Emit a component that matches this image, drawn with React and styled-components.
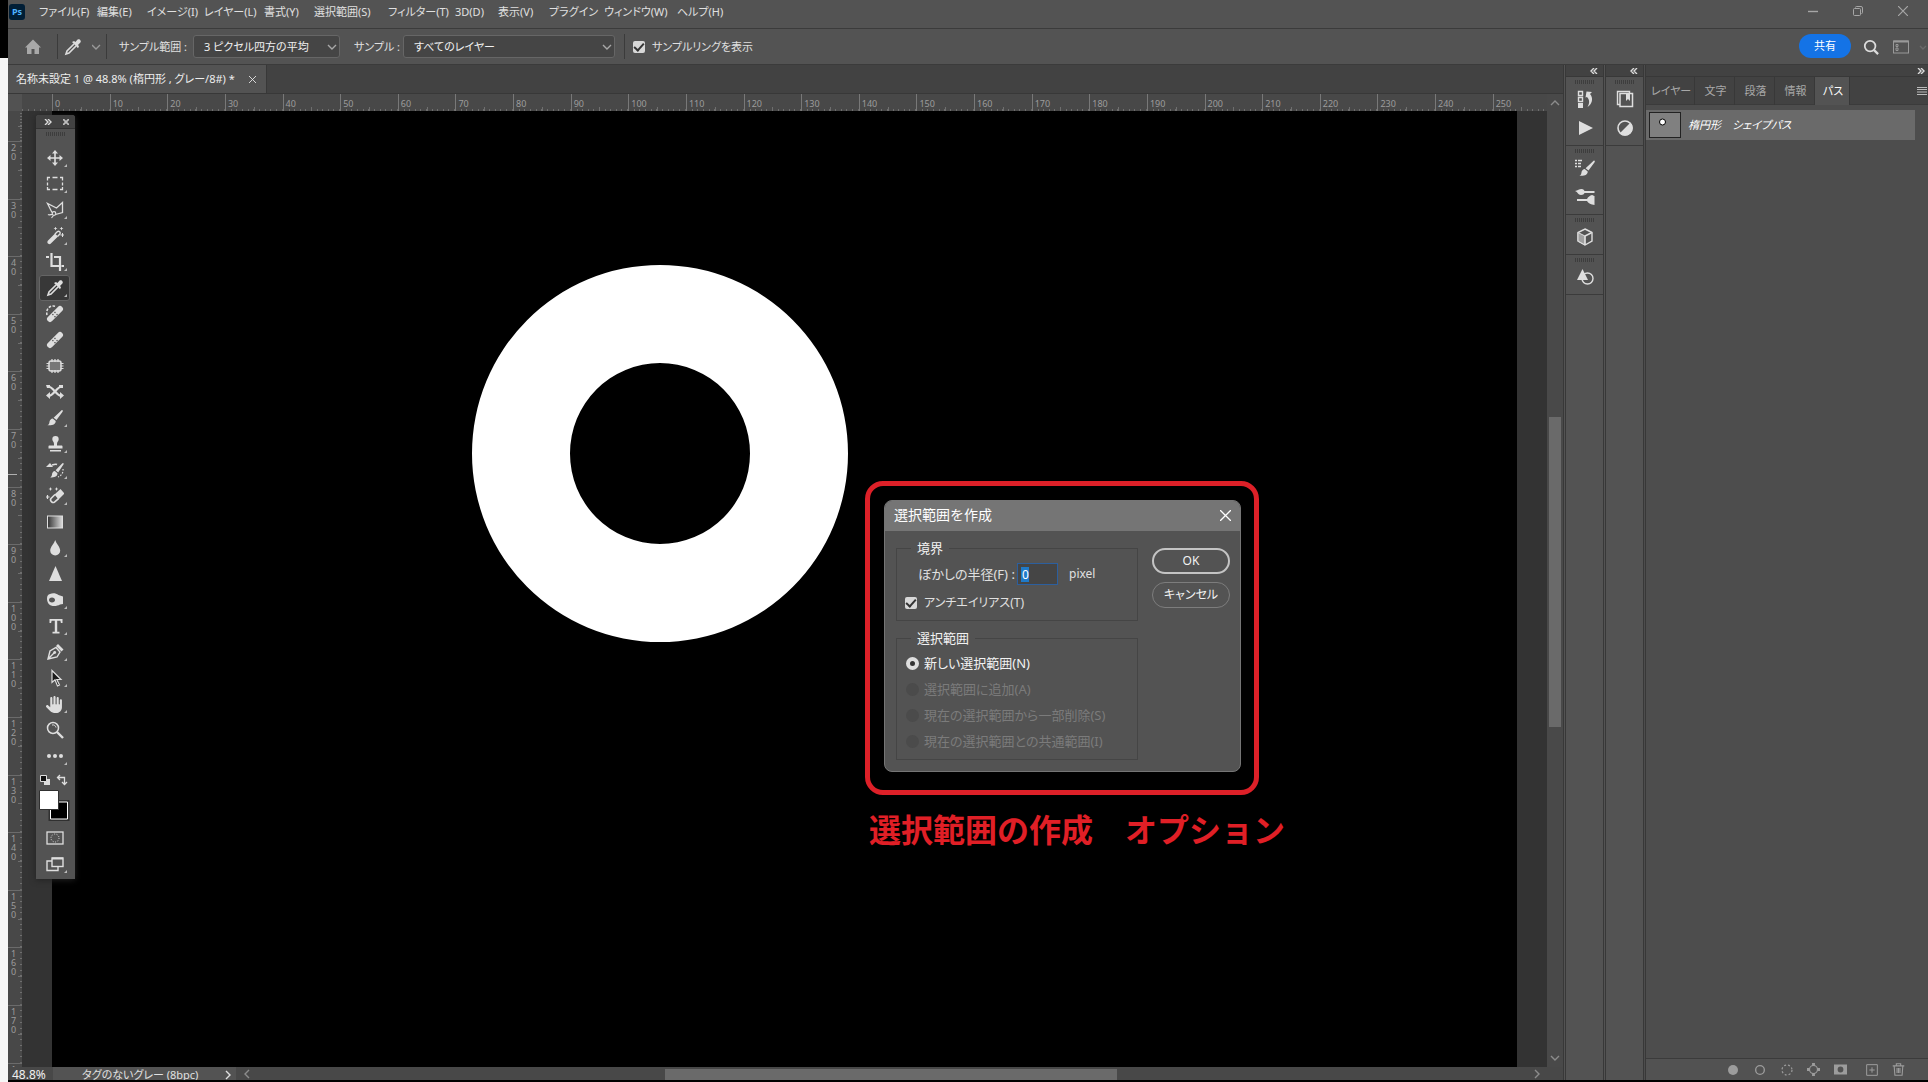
import styled, { createGlobalStyle, css } from "styled-components";
import { FaHand } from "react-icons/fa6";

const GlobalStyle = createGlobalStyle`
  * {
    box-sizing: border-box;
  }

  body {
    margin: 0;
    background: #000;
    color: #e0e0e0;
    font-family: "Noto Sans", "Noto Sans CJK JP", sans-serif;
    font-size: 11px;
    line-height: 16px;
    font-feature-settings: "palt";
  }

  button,
  input,
  select {
    margin: 0;
    padding: 0;
    border: 0;
    background: none;
    color: inherit;
    font: inherit;
    font-feature-settings: inherit;
  }

  svg {
    display: block;
    flex: none;
  }
`;

/* ---------- window frame ---------- */

const Screen = styled.div`
  display: grid;
  grid-template-columns: 8px minmax(0, 1fr);
  height: 100vh;
  overflow: hidden;
`;

const PageBehind = styled.div`
  margin-top: 58px;
  background: #f6f6f6;
`;

const Window = styled.div`
  display: flex;
  flex-direction: column;
  min-height: 0;
  margin-bottom: 2px;
  background: #535353;
`;

const MenuBar = styled.header`
  display: flex;
  align-items: flex-start;
  height: 29px;
  border-bottom: 1px solid #3b3b3b;
`;

const Logo = styled.div`
  width: 16px;
  height: 16px;
  margin: 4px 14px 0 1px;
  border-radius: 3px;
  background: #001e36;
  color: #4db2ff;
  font-size: 9px;
  font-weight: 700;
  text-align: center;
`;

const Menu = styled.nav`
  display: flex;
  padding-top: 4px;
`;

const MenuItem = styled.button`
  width: ${(props) => props.$width}px;
  text-align: left;
  white-space: nowrap;
`;

const WindowControls = styled.div`
  display: flex;
  margin-left: auto;
  padding-right: 3px;
  color: #a6a6a6;
`;

const WindowButton = styled.button`
  display: grid;
  place-items: center;
  width: 45px;
  height: 21px;
`;

/* ---------- options bar ---------- */

const OptionsBar = styled.div`
  display: flex;
  align-items: center;
  height: 36px;
  border-bottom: 1px solid #3b3b3b;
`;

const IconButton = styled.button`
  display: grid;
  place-items: center;
  width: ${(props) => props.$width || 26}px;
  height: 26px;
  color: ${(props) => props.$color || "#dcdcdc"};
`;

const Divider = styled.span`
  width: 1px;
  height: 25px;
  margin-right: ${(props) => props.$after || 0}px;
  background: #3b3b3b;
`;

const OptionLabel = styled.label`
  width: ${(props) => props.$width}px;
  white-space: nowrap;
`;

const SelectBox = styled.div`
  display: flex;
  align-items: center;
  width: ${(props) => props.$width}px;
  height: 23px;
  margin-right: ${(props) => props.$gap}px;
  padding-right: 2px;
  border: 1px solid #666;
  border-radius: 3px;
  background: #454545;
  color: #a8a8a8;

  select {
    flex: 1;
    min-width: 0;
    padding-left: 10px;
    appearance: none;
    color: #f0f0f0;
  }
`;

const CheckLabel = styled.label`
  display: flex;
  align-items: center;
  gap: 7px;
  white-space: nowrap;
`;

const CheckBox = styled.input.attrs({ type: "checkbox" })`
  display: grid;
  place-items: center;
  width: 12px;
  height: 12px;
  appearance: none;
  border-radius: 2px;
  background: #d8d8d8;

  &:checked::after {
    content: "";
    width: 4px;
    height: 8px;
    margin-bottom: 2px;
    border: solid #333;
    border-width: 0 2px 2px 0;
    transform: rotate(42deg);
  }
`;

const ShareArea = styled.div`
  display: flex;
  align-items: center;
  margin-left: auto;
`;

const ShareButton = styled.button`
  width: 52px;
  height: 24px;
  margin: 0 7px 2px 0;
  border-radius: 12px;
  background: #1473e6;
  color: #fff;
`;

/* ---------- document ---------- */

const Work = styled.div`
  display: flex;
  flex: 1;
  min-height: 0;
`;

const DocumentPane = styled.main`
  position: relative;
  display: flex;
  flex-direction: column;
  flex: 1;
  min-width: 0;
`;

const TabStrip = styled.div`
  display: flex;
  height: 29px;
  border-bottom: 1px solid #383838;
  background: #424242;
`;

const DocumentTab = styled.div`
  display: flex;
  align-items: center;
  justify-content: space-between;
  width: 259px;
  padding: 0 10px 0 8px;
  border-right: 1px solid #383838;
  background: #535353;
  color: #eee;
  white-space: nowrap;
`;

const Sheet = styled.div`
  display: grid;
  flex: 1;
  grid-template-columns: 14px minmax(0, 1fr) 16px;
  grid-template-rows: 17px minmax(0, 1fr);
  min-height: 0;
`;

const RulerCorner = styled.div`
  background: #525252;
`;

const tickColor = "#6e6e6e";

const TopRuler = styled.div`
  display: flex;
  overflow: hidden;
  background: #484848;
`;

const TopMark = styled.div`
  flex: 0 0 calc(1441px / 25);
  padding-left: 2px;
  border-left: 1px solid #787878;
  background:
    repeating-linear-gradient(to right, transparent 0 calc(10% - 1px), ${tickColor} calc(10% - 1px) 10%) bottom / 100% 2px no-repeat,
    linear-gradient(${tickColor}, ${tickColor}) 50% 100% / 1px 4px no-repeat;
  color: #9c9c9c;
  font-size: 9px;
  line-height: 20px;
`;

const TopLead = styled(TopMark)`
  flex-basis: 30px;
  border-left: 0;
  background: repeating-linear-gradient(to left, transparent 0 5px, ${tickColor} 5px 6px) bottom / 100% 2px no-repeat;
`;

const SideRuler = styled.div`
  position: relative;
  overflow: hidden;
  background: #484848;
`;

const SideMark = styled.div`
  height: calc(864px / 15);
  padding: 1px 5px 0 2px;
  border-top: 1px solid #6b6b6b;
  background:
    repeating-linear-gradient(to bottom, transparent 0 calc(10% - 1px), ${tickColor} calc(10% - 1px) 10%) right / 2px 100% no-repeat,
    linear-gradient(${tickColor}, ${tickColor}) 100% 50% / 4px 1px no-repeat;
  color: #9c9c9c;
  font-size: 9px;
  line-height: 9px;
  text-align: center;
  word-break: break-all;
`;

const SideLead = styled(SideMark)`
  height: 30px;
  border-top: 0;
`;

const PointerMark = styled.span`
  position: absolute;
  top: 363px;
  left: 0;
  width: 9px;
  height: 1px;
  background: #b0b0b0;
`;

const Pasteboard = styled.div`
  display: flex;
  min-width: 0;
  padding: 0 30px;
  background: #333;
`;

const Artboard = styled.div`
  position: relative;
  flex: 1;
  background: #000;
`;

const Ring = styled.div`
  position: absolute;
  top: 154px;
  left: 420px;
  width: 376px;
  height: 377px;
  border: 98px solid #fff;
  border-radius: 50%;
`;

const VerticalScroll = styled.div`
  display: flex;
  grid-column: 3;
  grid-row: 1 / 3;
  flex-direction: column;
  align-items: center;
  background: #494949;
  color: #8c8c8c;
`;

const ScrollArrow = styled.button`
  display: grid;
  place-items: center;
  width: ${(props) => props.$width || 16}px;
  height: ${(props) => props.$height || 18}px;
`;

const ScrollSpace = styled.span`
  flex: ${(props) => props.$share};
`;

const ScrollThumb = styled.span`
  flex: ${(props) => props.$share};
  background: #6a6a6a;
  ${(props) =>
    props.$across
      ? css`
          align-self: flex-end;
          height: 11px;
        `
      : css`
          width: 12px;
        `}
`;

const StatusBar = styled.footer`
  display: flex;
  height: 13px;
  overflow: hidden;
  background: #484848;
`;

const Zoom = styled.div`
  width: 45px;
  padding-left: 4px;
  color: #f0f0f0;
  font-size: 12px;
`;

const DocInfo = styled.div`
  display: flex;
  justify-content: space-between;
  width: 183px;
  padding: 0 5px 0 29px;
  background: #535353;
  white-space: nowrap;
`;

const HorizontalScroll = styled.div`
  display: flex;
  align-items: center;
  flex: 1;
  padding-right: 16px;
  color: #8c8c8c;
`;

/* ---------- floating tool palette ---------- */

const Palette = styled.aside`
  position: absolute;
  top: 50px;
  left: 28px;
  width: 39px;
  padding-bottom: 2px;
  border-radius: 3px 3px 0 0;
  background: #535353;
  box-shadow: 0 1px 6px #222;
`;

const PaletteHead = styled.div`
  display: flex;
  align-items: center;
  justify-content: space-between;
  height: 14px;
  padding: 0 6px 0 8px;
  border-bottom: 1px solid #333;
  border-radius: 3px 3px 0 0;
  background: #424242;
  color: #bdbdbd;
`;

const Grip = styled.div`
  width: 19px;
  height: 4px;
  margin: 3px auto ${(props) => props.$after || 1}px;
  background: repeating-linear-gradient(to right, #3d3d3d 0 1px, transparent 1px 2px);
`;

const ToolList = styled.div`
  display: flex;
  flex-direction: column;
  padding-left: 3px;
`;

const ToolButton = styled.button`
  position: relative;
  display: grid;
  place-items: center;
  width: 31px;
  height: 26px;
  color: #dedede;

  ${(props) =>
    props.$active &&
    css`
      border-radius: 3px;
      background: #383838;
      box-shadow: inset 0 0 0 1px #656565;
    `}

  ${(props) =>
    props.$more &&
    css`
      &::after {
        content: "";
        position: absolute;
        right: 3px;
        bottom: 4px;
        border-bottom: 3px solid #bbb;
        border-left: 3px solid transparent;
      }
    `}
`;

const ColorWell = styled.div`
  padding: 5px 0 4px 3px;
`;

const ColorActions = styled.div`
  display: flex;
  gap: 5px;
  margin-bottom: 4px;

  button {
    height: 12px;
  }
`;

/* ---------- dialog and annotation ---------- */

const RedFrame = styled.div`
  position: absolute;
  top: 370px;
  left: 813px;
  width: 394px;
  height: 314px;
  border: 5px solid #dd2028;
  border-radius: 18px;
`;

const RedCaption = styled.p`
  position: absolute;
  top: 697px;
  left: 817px;
  margin: 0;
  color: #e01f26;
  font-family: "Noto Sans CJK JP", sans-serif;
  font-size: 32px;
  font-weight: 700;
  font-feature-settings: normal;
  line-height: 40px;
  white-space: nowrap;
`;

const Dialog = styled.section`
  position: absolute;
  top: 389px;
  left: 832px;
  width: 357px;
  border: 1px solid #757575;
  border-radius: 8px;
  background: #535353;
  font-size: 12px;
  overflow: hidden;
`;

const DialogTitle = styled.header`
  display: flex;
  align-items: center;
  justify-content: space-between;
  height: 30px;
  padding: 0 9px 2px;
  background: #757575;
  color: #fff;

  h1 {
    margin: 0;
    font-size: 14px;
    font-weight: 400;
    font-feature-settings: normal;
  }
`;

const DialogBody = styled.form`
  display: grid;
  grid-template-columns: 242px 78px;
  justify-content: space-between;
  padding: 8px 10px 11px 11px;
`;

const Groups = styled.div`
  display: flex;
  flex-direction: column;
  gap: 8px;
`;

const Group = styled.fieldset`
  display: flex;
  flex-direction: column;
  gap: ${(props) => props.$gap || 0}px;
  margin: 0;
  padding: ${(props) => props.$top || 3}px 8px 5px;
  border: 1px solid #454545;

  legend {
    margin-left: 6px;
    padding: 0 6px;
    color: #f2f2f2;
    font-size: 13px;
    line-height: 18px;
  }
`;

const FieldRow = styled.div`
  display: flex;
  align-items: center;
  height: 24px;
  padding-left: 13px;

  label {
    width: 99px;
    font-size: 13px;
    white-space: nowrap;
  }
`;

const RadiusInput = styled.input`
  width: 41px;
  height: 22px;
  margin-right: 11px;
  padding-left: 4px;
  border: 1px solid #2c5f9e;
  background: linear-gradient(#1f7ac9, #1f7ac9) 3px 50% / 8px 15px no-repeat #454545;
  color: #fff;
`;

const DialogCheck = styled(CheckLabel)`
  height: 24px;
`;

const RadioRow = styled.label`
  display: flex;
  align-items: center;
  gap: 5px;
  height: 26px;
  padding-left: 1px;
  color: ${(props) => (props.$disabled ? "#7b7b7b" : "#f2f2f2")};
  font-size: 13px;
  white-space: nowrap;

  input {
    width: 13px;
    height: 13px;
    appearance: none;
    border-radius: 50%;
    background: #4b4b4b;
  }

  input:checked {
    border: 4px solid #dedede;
    background: #333;
  }
`;

const DialogButtons = styled.div`
  display: flex;
  flex-direction: column;
  gap: 8px;
  padding-top: 9px;
`;

const PillButton = styled.button`
  height: 26px;
  border: ${(props) => (props.$primary ? "2px solid #c4c4c4" : "1px solid #7d7d7d")};
  border-radius: 13px;
  color: #f2f2f2;
`;

/* ---------- right docks ---------- */

const Dock = styled.aside`
  display: flex;
  flex-direction: column;
  width: 40px;
  border-left: 3px double #383838;
`;

const DockHead = styled.div`
  display: flex;
  align-items: center;
  justify-content: flex-end;
  height: 12px;
  padding-right: ${(props) => props.$right || 5}px;
  border-bottom: 1px solid #383838;
  background: #424242;
`;

const DockGroup = styled.div`
  display: flex;
  flex-direction: column;
  align-items: center;
  padding-bottom: 2px;
  border-bottom: 1px solid #3b3b3b;
`;

const DockButton = styled.button`
  display: grid;
  place-items: center;
  width: 37px;
  height: 29px;
  padding-bottom: 1px;
  color: #dedede;
`;

const Panel = styled.aside`
  display: flex;
  flex-direction: column;
  width: 285px;
  border-left: 3px double #383838;
  background: #4d4d4d;
`;

const PanelTabs = styled.div`
  display: flex;
  align-items: center;
  height: 28px;
  border-bottom: 1px solid #3b3b3b;
  background: #424242;
`;

const PanelTab = styled.button`
  width: ${(props) => props.$width}px;
  height: 28px;
  padding-left: 2px;
  border-right: 1px solid #383838;
  color: ${(props) => (props.$active ? "#fff" : "#a8a8a8")};
  background: ${(props) => (props.$active ? "#535353" : "none")};
  white-space: nowrap;
`;

const PanelMenu = styled.button`
  margin-left: auto;
  padding-right: 1px;
  color: #bbb;
`;

const PathRow = styled.div`
  display: flex;
  align-items: center;
  gap: 7px;
  height: 30px;
  margin: 5px 13px 0 0;
  padding: 0 3px;
  background: #6a6a6a;
  color: #fff;
  font-style: italic;
`;

const PathThumb = styled.span`
  width: 32px;
  height: 26px;
  border: 1px solid #222;
  background: #808080;
`;

const PanelFoot = styled.div`
  display: flex;
  align-items: center;
  justify-content: flex-end;
  height: 22px;
  margin-top: auto;
  padding-right: 16px;
  border-top: 1px solid #3b3b3b;
  background: #525252;
  color: #9c9c9c;
`;

const FootButton = styled.button`
  display: grid;
  place-items: center;
  width: 27px;
  height: 21px;

  &:nth-last-child(2) {
    margin-left: 4px;
  }
`;

/* ---------- icons ---------- */

const Icon = ({ size = 18, children, ...rest }) => (
  <svg width={size} height={size} viewBox="0 0 18 18" fill="none" stroke="currentColor" aria-hidden="true" {...rest}>
    {children}
  </svg>
);

const solid = { fill: "currentColor", stroke: "none" };

const Chevron = ({ d = "M1 3l4 4 4-4" }) => (
  <svg width="10" height="10" viewBox="0 0 10 10" fill="none" stroke="currentColor" strokeWidth="1.4" aria-hidden="true">
    <path d={d} />
  </svg>
);

const DoubleArrow = ({ right }) => (
  <svg width="8" height="6" viewBox="0 0 8 6" fill="none" stroke="#dcdcdc" strokeWidth="1.4" aria-hidden="true">
    <path d={right ? "M1 0l3 3-3 3M4 0l3 3-3 3" : "M4 0L1 3l3 3M7 0L4 3l3 3"} />
  </svg>
);

const Cross = ({ size = 10, width = 1.2 }) => (
  <svg width={size} height={size} viewBox="0 0 10 10" stroke="currentColor" strokeWidth={width} aria-hidden="true">
    <path d="M0 0l10 10M10 0L0 10" />
  </svg>
);

const Dropper = () => (
  <Icon>
    <path d="M10 6l-7 7-1 3 3-1 7-7" strokeWidth="1.6" />
    <path {...solid} d="M8 4l2-1 1.4 1L13.600 1.600c1.800-1.300 4.200 1.200 2.800 3L14 7l1 1.200-1 2z" />
  </Icon>
);

const bandage = (
  <>
    <path d="M4 14L14 4" strokeWidth="6" strokeLinecap="round" />
    <g fill="#505050" stroke="none">
      <rect x="8.300" y="6.800" width="1.300" height="1.300" />
      <rect x="10.400" y="8.900" width="1.300" height="1.300" />
      <rect x="6.200" y="8.900" width="1.300" height="1.300" />
      <rect x="8.300" y="11" width="1.300" height="1.300" />
    </g>
  </>
);

const brush = (
  <>
    <path {...solid} d="M16.500 1.200c.6.500.4 1-.1 1.800L10.500 11 7.600 8.700l7.200-6.800c.7-.7 1.200-1.100 1.700-.7z" />
    <path {...solid} d="M6.700 9.400l3 2.500c.2 3-3 4.800-8.200 4.300 2-.9 1.700-2.300 2.100-4 .4-1.500 1.600-2.700 3.100-2.800z" />
  </>
);

const stars = (
  <path {...solid} d="M7.500 0l.6 1.400 1.400.6-1.400.6L7.500 4l-.6-1.400L5.500 2l1.400-.6zM13.500 0l.6 1.400 1.400.6-1.400.6-.6 1.400-.6-1.400-1.400-.6 1.400-.6z" />
);

const toolIcons = {
  move: (
    <Icon>
      <path d="M9 3v12M3 9h12" strokeWidth="1.6" />
      <path {...solid} d="M9 1l3 3.500H6zM9 17l3-3.500H6zM1 9l3.500-3v6zM17 9l-3.500-3v6z" />
    </Icon>
  ),
  marquee: (
    <Icon>
      <path d="M1.500 5.500v-3H4M6.500 2.500h5M14 2.500h2.500v3M16.500 7.500v3M16.500 12v2.500H14M11.500 14.500h-5M4 14.500H1.500V12M1.500 10.500v-3" strokeWidth="1.3" />
    </Icon>
  ),
  lasso: (
    <Icon>
      <path d="M6 11.500L1.500 2.500l9 4.500 6-5.500v10l-7 2" strokeWidth="1.3" />
      <circle cx="8" cy="12.500" r="1.800" strokeWidth="1.2" />
      <path d="M6.500 13.500c-2 .2-3.500.8-4.500 0M7.500 14.500L5.500 17" strokeWidth="1.2" />
    </Icon>
  ),
  wand: (
    <Icon>
      <path {...solid} d="M1.600 14l7.400-7.500L12 9.500l-7.400 7.300c-2 1.200-4-.9-3-2.800z" />
      <path d="M9 7l2.500-2.400c1.600-1 3.400.9 2.400 2.400L11.500 9.500" strokeWidth="1.4" />
      <g transform="translate(2 -.5)">{stars}</g>
      <path d="M16.500 6v4M14.500 8h4" />
    </Icon>
  ),
  crop: (
    <Icon>
      <path d="M0 4h3M5.500 0v13H13M8 4h6v14M15.500 13H18" strokeWidth="2.2" />
    </Icon>
  ),
  dropper: <Dropper />,
  spot: (
    <Icon>
      <path d="M1 10C-.5 4 4-.5 10 1.500" strokeWidth="1.600" strokeDasharray="2.500 1.500" />
      {bandage}
    </Icon>
  ),
  heal: <Icon>{bandage}</Icon>,
  patch: (
    <Icon>
      <rect x="3" y="4" width="12" height="10" rx="2" strokeWidth="1.5" fill="#777" />
      <path d="M6 2v3M9 2v3M12 2v3M6 13v3M9 13v3M12 13v3M.5 6.500h3M.5 9h3M.5 11.500h3M14.500 6.500h3M14.500 9h3M14.500 11.500h3" strokeWidth="1.2" />
    </Icon>
  ),
  mix: (
    <Icon>
      <path d="M2 3.500c5 0 8 8.500 13 9.500M16 3.500c-5 0-8 8.500-13 9.500" strokeWidth="2.2" />
      <path {...solid} d="M0 12.500L4 9v7zM18 12.500L14 9v7zM0 2h4v3H1zM17 2h-4v3h4z" />
    </Icon>
  ),
  brush: <Icon>{brush}</Icon>,
  stamp: (
    <Icon>
      <path {...solid} d="M9.500 1a3.200 3.200 0 013.200 3.200c0 2-1.700 2.400-1.700 4.800v1.500h4.500c.7 0 1 .4 1 1v2h-14v-2c0-.6.3-1 1-1H8V9c0-2.400-1.700-2.800-1.700-4.800A3.200 3.200 0 019.500 1zM4 15h11v1.500H4z" />
    </Icon>
  ),
  history: (
    <Icon>
      <g transform="translate(3 1) scale(.87 .95)">{brush}</g>
      <path {...solid} d="M0 6l4-4 3 4z" />
      <path d="M6 4c3-1 4-1 5-.5" strokeWidth="1.5" />
      <path d="M17 8c.5 4-2 7-5 8" strokeWidth="1.2" strokeDasharray="1.5 1.5" />
    </Icon>
  ),
  eraser: (
    <Icon>
      <path {...solid} d="M8.500 7.500l6-5.500 4 4.500-6 6z" />
      <path d="M9 7.500l-4 4c-1.700 2 1.500 5 3.500 3.600l4-3.500" strokeWidth="1.6" />
      <g transform="translate(-3 0)">{stars}</g>
      <path d="M1.500 8v4M-.5 10h4" strokeWidth="1.2" />
    </Icon>
  ),
  gradient: (
    <Icon>
      <defs>
        <linearGradient id="toolGradient">
          <stop offset="0" stopColor="#333" />
          <stop offset="1" stopColor="#ddd" />
        </linearGradient>
      </defs>
      <rect x="1.500" y="3" width="15" height="12" fill="url(#toolGradient)" />
    </Icon>
  ),
  blur: (
    <Icon>
      <path {...solid} d="M9.200 1c1 3.500 5 7 5 10.500a5 5 0 01-10 0C4.200 8 8.200 4.500 9.200 1z" />
    </Icon>
  ),
  sharpen: (
    <Icon>
      <path {...solid} d="M9.500 1L16 16H3z" />
    </Icon>
  ),
  sponge: (
    <Icon>
      <path {...solid} fillRule="evenodd" d="M4 3c3-1.200 6-.7 8.500 1l4.500 1.500V13l-3 .5c-2.500 1.500-6 2-9 1C2 13.500 1 10 1 7.500 1 5 2 3.500 4 3zM6 6.500c-2 0-3 1.200-3 2.500s1.200 2.500 3 2.500S9 10.500 9 9 7.800 6.500 6 6.500z" />
    </Icon>
  ),
  type: (
    <Icon>
      <path {...solid} d="M3.500 2h13v4h-1.600l-.5-2.200h-3.200v11h2.300v1.700h-7v-1.700h2.300v-11H5.600L5.100 6H3.500z" />
    </Icon>
  ),
  pen: (
    <Icon>
      <path d="M2 16L4 8l6-3.500L14 9l-3 5zM2.500 15.500l6-6" strokeWidth="1.4" />
      <path {...solid} d="M10 3l2-2 5.500 5.500-2 2z" />
      <circle {...solid} cx="8.700" cy="9.500" r="1.4" />
    </Icon>
  ),
  select: (
    <Icon>
      <path d="M6 1.500v12l3-2.700 2.500 6.200 2-1-2.700-5.500H15z" fill="#1a1a1a" strokeWidth="1.2" />
    </Icon>
  ),
  hand: <FaHand size={17} />,
  zoom: (
    <Icon>
      <circle cx="7" cy="7" r="5.500" strokeWidth="1.5" />
      <path d="M11 11l6 6" strokeWidth="2.4" />
      <path d="M6 4c2-.5 3.500.5 4 2.500" />
    </Icon>
  ),
  dots: (
    <Icon>
      <g {...solid}>
        <circle cx="3" cy="9" r="2" />
        <circle cx="9" cy="9" r="2" />
        <circle cx="15" cy="9" r="2" />
      </g>
    </Icon>
  ),
  mask: (
    <Icon>
      <rect x="1" y="3" width="16" height="12" strokeWidth="1.3" />
      <circle cx="9" cy="9" r="4" strokeDasharray="1 1.500" />
    </Icon>
  ),
  screen: (
    <Icon>
      <path d="M6 6H1v9.500h11V12" strokeWidth="1.4" />
      <rect x="6" y="3" width="11" height="8.500" strokeWidth="1.4" />
      <path d="M6 3.500h11" strokeWidth="2" />
    </Icon>
  ),
};

/* ---------- data ---------- */

const menus = [
  ["ファイル(F)", 58],
  ["編集(E)", 50],
  ["イメージ(I)", 57],
  ["レイヤー(L)", 60],
  ["書式(Y)", 50],
  ["選択範囲(S)", 74],
  ["フィルター(T)", 67],
  ["3D(D)", 43],
  ["表示(V)", 51],
  ["プラグイン", 55],
  ["ウィンドウ(W)", 73],
  ["ヘルプ(H)", 60],
];

const tools = [
  ["move", "移動ツール", true],
  ["marquee", "長方形選択ツール", true],
  ["lasso", "多角形選択ツール", true],
  ["wand", "自動選択ツール", true],
  ["crop", "切り抜きツール", true],
  ["dropper", "スポイトツール", true],
  ["spot", "スポット修復ブラシツール"],
  ["heal", "修復ブラシツール"],
  ["patch", "パッチツール"],
  ["mix", "コンテンツに応じた移動ツール"],
  ["brush", "ブラシツール", true],
  ["stamp", "コピースタンプツール", true],
  ["history", "ヒストリーブラシツール", true],
  ["eraser", "マジック消しゴムツール", true],
  ["gradient", "グラデーションツール"],
  ["blur", "ぼかしツール", true],
  ["sharpen", "シャープツール"],
  ["sponge", "スポンジツール", true],
  ["type", "文字ツール", true],
  ["pen", "ペンツール", true],
  ["select", "パス選択ツール", true],
  ["hand", "手のひらツール", true],
  ["zoom", "ズームツール"],
  ["dots", "ツールバーを編集", true],
];

const topMarks = Array.from({ length: 26 }, (_, i) => i * 10);
const sideMarks = Array.from({ length: 17 }, (_, i) => 20 + i * 10);

const radios = [
  ["新しい選択範囲(N)", false],
  ["選択範囲に追加(A)", true],
  ["現在の選択範囲から一部削除(S)", true],
  ["現在の選択範囲との共通範囲(I)", true],
];

const panelTabs = [
  ["レイヤー", 49],
  ["文字", 40],
  ["段落", 40],
  ["情報", 40],
  ["パス", 35],
];

/* ---------- components ---------- */

const TopBar = () => (
  <MenuBar>
    <Logo>Ps</Logo>
    <Menu>
      {menus.map(([label, width]) => (
        <MenuItem key={label} $width={width}>
          {label}
        </MenuItem>
      ))}
    </Menu>
    <WindowControls>
      <WindowButton aria-label="最小化">
        <Chevron d="M0 5.500h10" />
      </WindowButton>
      <WindowButton aria-label="元に戻す">
        <svg width="10" height="10" viewBox="0 0 10 10" fill="none" stroke="currentColor">
          <rect x=".5" y="2.500" width="7" height="7" rx="1" />
          <path d="M2.500 1.500q0-1 1-1H8q1.500 0 1.500 1.500v4.500q0 1-1 1" />
        </svg>
      </WindowButton>
      <WindowButton aria-label="閉じる">
        <Cross />
      </WindowButton>
    </WindowControls>
  </MenuBar>
);

const ToolOptions = () => (
  <OptionsBar>
    <IconButton $width={49} $color="#a8a8a8" aria-label="ホーム">
      <Icon>
        <path {...solid} d="M9 1.500l8 8h-2V16h-4.500v-5h-3v5H3V9.500H1z" />
      </Icon>
    </IconButton>
    <Divider />
    <IconButton $width={30} aria-label="スポイト">
      <Dropper />
    </IconButton>
    <IconButton $width={18} $color="#999" aria-label="プリセット">
      <Chevron d="M0 3l4 4 4-4" />
    </IconButton>
    <Divider $after={12} />
    <OptionLabel htmlFor="sampleSize" $width={74}>
      サンプル範囲 :
    </OptionLabel>
    <SelectBox $width={147} $gap={14}>
      <select id="sampleSize">
        <option>3 ピクセル四方の平均</option>
      </select>
      <Chevron />
    </SelectBox>
    <OptionLabel htmlFor="sampleLayer" $width={49}>
      サンプル :
    </OptionLabel>
    <SelectBox $width={212} $gap={9}>
      <select id="sampleLayer">
        <option>すべてのレイヤー</option>
      </select>
      <Chevron />
    </SelectBox>
    <Divider $after={8} />
    <CheckLabel>
      <CheckBox defaultChecked />
      サンプルリングを表示
    </CheckLabel>
    <ShareArea>
      <ShareButton>共有</ShareButton>
      <IconButton aria-label="検索">
        <Icon size={16}>
          <circle cx="8" cy="8" r="6" strokeWidth="2" />
          <path d="M12.500 12.500L17 17" strokeWidth="2.5" />
        </Icon>
      </IconButton>
      <IconButton $width={34} $color="#999" aria-label="ワークスペース">
        <Icon>
          <rect x="1.500" y="3" width="15" height="12" />
          <path d="M1.500 3.500h15" strokeWidth="2" />
          <path d="M4 6.500h2v2H4zM4 10h2v2.500H4z" />
        </Icon>
      </IconButton>
      <IconButton $width={10} $color="#6a6a6a" aria-label="その他">
        <Chevron d="M2 4l3 3 3-3" />
      </IconButton>
    </ShareArea>
  </OptionsBar>
);

const ToolPalette = () => (
  <Palette>
    <PaletteHead>
      <DoubleArrow right />
      <Cross size={6} width={3} />
    </PaletteHead>
    <Grip $after={9} />
    <ToolList>
      {tools.map(([name, label, more]) => (
        <ToolButton key={name} $more={more} $active={name === "dropper"} aria-label={label}>
          {toolIcons[name]}
        </ToolButton>
      ))}
    </ToolList>
    <ColorWell>
      <ColorActions>
        <button aria-label="初期設定の色">
          <svg width="12" height="12" viewBox="0 0 12 12">
            <path d="M5 5h6v6H5z" fill="#dedede" />
            <path d="M1.500 1.500h6v6h-6z" fill="#111" stroke="#dedede" />
          </svg>
        </button>
        <button aria-label="色を入れ替え">
          <svg width="12" height="12" viewBox="0 0 12 12" fill="none" stroke="#dedede" strokeWidth="1.3">
            <path d="M2 3.500h6.500V10M4 1L1.500 3.500 4 6M6 8l2.500 2.500L11 8" />
          </svg>
        </button>
      </ColorActions>
      <svg width="32" height="31" viewBox="0 0 32 31">
        <path d="M11 11.500h18v18H11z" fill="#000" stroke="#303030" strokeWidth="3" />
        <path d="M11.500 12h17v17h-17z" fill="#000" stroke="#fff" />
        <path d="M.5.5h19v19H.5z" fill="#fff" stroke="#303030" />
      </svg>
    </ColorWell>
    <ToolList>
      <ToolButton aria-label="クイックマスク">{toolIcons.mask}</ToolButton>
      <ToolButton $more aria-label="スクリーンモード">
        {toolIcons.screen}
      </ToolButton>
    </ToolList>
  </Palette>
);

const SelectionDialog = () => (
  <Dialog role="dialog" aria-labelledby="dialogTitle">
    <DialogTitle>
      <h1 id="dialogTitle">選択範囲を作成</h1>
      <button aria-label="閉じる">
        <Cross size={11} />
      </button>
    </DialogTitle>
    <DialogBody onSubmit={(e) => e.preventDefault()}>
      <Groups>
        <Group $gap={5} $top={5}>
          <legend>境界</legend>
          <FieldRow>
            <label htmlFor="radius">ぼかしの半径(F) :</label>
            <RadiusInput id="radius" defaultValue="0" />
            pixel
          </FieldRow>
          <DialogCheck>
            <CheckBox defaultChecked />
            アンチエイリアス(T)
          </DialogCheck>
        </Group>
        <Group>
          <legend>選択範囲</legend>
          {radios.map(([label, disabled]) => (
            <RadioRow key={label} $disabled={disabled}>
              <input type="radio" name="operation" disabled={disabled} defaultChecked={!disabled} />
              {label}
            </RadioRow>
          ))}
        </Group>
      </Groups>
      <DialogButtons>
        <PillButton $primary>OK</PillButton>
        <PillButton type="button">キャンセル</PillButton>
      </DialogButtons>
    </DialogBody>
  </Dialog>
);

const DocumentView = () => (
  <DocumentPane>
    <TabStrip>
      <DocumentTab>
        名称未設定 1 @ 48.8% (楕円形 , グレー/8#) *
        <button aria-label="タブを閉じる">
          <Cross size={7} />
        </button>
      </DocumentTab>
    </TabStrip>
    <Sheet>
      <RulerCorner />
      <TopRuler>
        <TopLead />
        {topMarks.map((n) => (
          <TopMark key={n}>{n}</TopMark>
        ))}
      </TopRuler>
      <VerticalScroll>
        <ScrollArrow aria-label="上へ">
          <Chevron d="M1 7l4-4 4 4" />
        </ScrollArrow>
        <ScrollSpace $share={305} />
        <ScrollThumb $share={311} />
        <ScrollSpace $share={322} />
        <ScrollArrow aria-label="下へ">
          <Chevron />
        </ScrollArrow>
      </VerticalScroll>
      <SideRuler>
        <SideLead />
        {sideMarks.map((n) => (
          <SideMark key={n}>{n}</SideMark>
        ))}
        <PointerMark />
      </SideRuler>
      <Pasteboard>
        <Artboard>
          <Ring />
          <RedFrame />
          <SelectionDialog />
          <RedCaption>選択範囲の作成　オプション</RedCaption>
        </Artboard>
      </Pasteboard>
    </Sheet>
    <StatusBar>
      <Zoom>48.8%</Zoom>
      <DocInfo>
        タグのないグレー (8bpc)
        <ScrollArrow $width={8} $height={16} aria-label="情報を選択">
          <Chevron d="M3 1l4 4-4 4" />
        </ScrollArrow>
      </DocInfo>
      <HorizontalScroll>
        <ScrollArrow $width={21} $height={13} aria-label="左へ">
          <Chevron d="M7 1L3 5l4 4" />
        </ScrollArrow>
        <ScrollSpace $share={408} />
        <ScrollThumb $share={452} $across />
        <ScrollSpace $share={410} />
        <ScrollArrow $width={20} $height={13} aria-label="右へ">
          <Chevron d="M3 1l4 4-4 4" />
        </ScrollArrow>
      </HorizontalScroll>
    </StatusBar>
    <ToolPalette />
  </DocumentPane>
);

const Docks = () => (
  <>
    <Dock>
      <DockHead>
        <DoubleArrow />
      </DockHead>
      <DockGroup>
        <Grip />
        <DockButton aria-label="ヒストリー">
          <Icon>
            <path d="M2.500 1.500h4v4h-4zM2.500 7.500h4v4h-4z" strokeWidth="1.4" />
            <path {...solid} d="M2 13h5v5H2zM9.500 7.500L10.500 1.500 16 2l-2 2c3.500 4 2.500 10-2.500 13 2.500-4 2-7.500-.5-10z" />
          </Icon>
        </DockButton>
        <DockButton aria-label="アクション">
          <Icon>
            <path {...solid} d="M3 2l14 7-14 7z" />
          </Icon>
        </DockButton>
      </DockGroup>
      <DockGroup>
        <Grip />
        <DockButton aria-label="ブラシ設定">
          <svg width="22" height="18" viewBox="0 0 22 18" fill="none" stroke="currentColor">
            <g transform="translate(4 .5)">{brush}</g>
            <path d="M1 1.500h2M4 1.500h4M1 4.500h2M4 4.500h3M1 7.500h2M4 7.500h3" strokeWidth="1.6" />
          </svg>
        </DockButton>
        <DockButton aria-label="ブラシ">
          <svg width="20" height="18" viewBox="0 0 20 18" fill="currentColor">
            <path d="M0 3c3-.5 4-2 6.500-2C8.500 1 9.300 2.300 9.500 3h10v2h-10c-.5 1-1.500 2-3.500 2-3 0-3-3-6-4zM2 11h10c1-2 3-3.500 5-4 1 .5 2.500 1 2.500 1v9l-2.500-.5c-2-.5-4-1.500-5-3.500H2z" />
          </svg>
        </DockButton>
      </DockGroup>
      <DockGroup>
        <Grip />
        <DockButton aria-label="3D">
          <Icon>
            <path d="M9 1l7 3.500V13l-7 4-7-4V4.500z" strokeWidth="1.4" />
            <path d="M2 4.500L9 8v9l-7-4z" fill="#a0a0a0" />
            <path d="M9 8l7-3.500M9 8v9" strokeWidth="1.4" />
          </Icon>
        </DockButton>
      </DockGroup>
      <DockGroup>
        <Grip />
        <DockButton aria-label="シェイプ">
          <Icon>
            <circle cx="11.500" cy="10.500" r="5.500" strokeWidth="1.4" />
            <path {...solid} d="M6.500 1L12 12H1z" />
          </Icon>
        </DockButton>
      </DockGroup>
    </Dock>
    <Dock>
      <DockHead>
        <DoubleArrow />
      </DockHead>
      <DockGroup>
        <Grip />
        <DockButton aria-label="CC ライブラリ">
          <Icon>
            <path d="M4 14.500H1.500v-13h12V4" strokeWidth="1.4" />
            <rect x="4" y="3.500" width="12.500" height="13" strokeWidth="1.5" />
            <path {...solid} d="M10 4h4v7l-2-2-2 2z" />
          </Icon>
        </DockButton>
        <DockButton aria-label="色調補正">
          <Icon>
            <circle cx="9" cy="9" r="7" strokeWidth="1.6" />
            <path {...solid} d="M14.500 3.500a7.500 7.500 0 01-11 11z" />
          </Icon>
        </DockButton>
      </DockGroup>
    </Dock>
  </>
);

const PathsPanel = () => (
  <Panel>
    <DockHead $right={3}>
      <DoubleArrow right />
    </DockHead>
    <PanelTabs>
      {panelTabs.map(([label, width]) => (
        <PanelTab key={label} $width={width} $active={label === "パス"}>
          {label}
        </PanelTab>
      ))}
      <PanelMenu aria-label="パネルメニュー">
        <svg width="10" height="8" viewBox="0 0 10 8" stroke="currentColor">
          <path d="M0 .5h10M0 2.500h10M0 5h10M0 7.500h10" />
        </svg>
      </PanelMenu>
    </PanelTabs>
    <PathRow>
      <PathThumb>
        <svg width="30" height="24" viewBox="0 0 30 24">
          <circle cx="12.500" cy="9" r="3" fill="#fff" stroke="#000" />
        </svg>
      </PathThumb>
      楕円形　シェイプパス
    </PathRow>
    <PanelFoot>
      <FootButton aria-label="塗りつぶす">
        <Icon size={12}>
          <circle {...solid} cx="9" cy="9" r="7.500" />
        </Icon>
      </FootButton>
      <FootButton aria-label="境界線を描く">
        <Icon size={12}>
          <circle cx="9" cy="9" r="6.500" strokeWidth="2" />
        </Icon>
      </FootButton>
      <FootButton aria-label="選択範囲として読み込む">
        <Icon size={12}>
          <circle cx="9" cy="9" r="7.500" strokeWidth="1.8" strokeDasharray="3 3" />
        </Icon>
      </FootButton>
      <FootButton aria-label="作業用パスを作成">
        <Icon size={13}>
          <circle cx="9" cy="9" r="5.500" strokeWidth="1.6" />
          <path {...solid} d="M7 0h4v4H7zM7 14h4v4H7zM0 7h4v4H0zM14 7h4v4h-4z" />
        </Icon>
      </FootButton>
      <FootButton aria-label="マスクを追加">
        <Icon size={13}>
          <path {...solid} fillRule="evenodd" d="M0 2h18v14H0zM9 5a4 4 0 100 8 4 4 0 000-8z" />
        </Icon>
      </FootButton>
      <FootButton aria-label="新規パス">
        <Icon size={12}>
          <path d="M1 1h16v16H1zM9 5v8M5 9h8" strokeWidth="1.5" />
        </Icon>
      </FootButton>
      <FootButton aria-label="削除">
        <Icon size={13}>
          <path d="M1 4h16M6 4V1h6v3M3 4l1 13h10l1-13M7 7v7M9 7v7M11 7v7" strokeWidth="1.5" />
        </Icon>
      </FootButton>
    </PanelFoot>
  </Panel>
);

export default function App() {
  return (
    <>
      <GlobalStyle />
      <Screen>
        <PageBehind />
        <Window>
          <TopBar />
          <ToolOptions />
          <Work>
            <DocumentView />
            <Docks />
            <PathsPanel />
          </Work>
        </Window>
      </Screen>
    </>
  );
}
